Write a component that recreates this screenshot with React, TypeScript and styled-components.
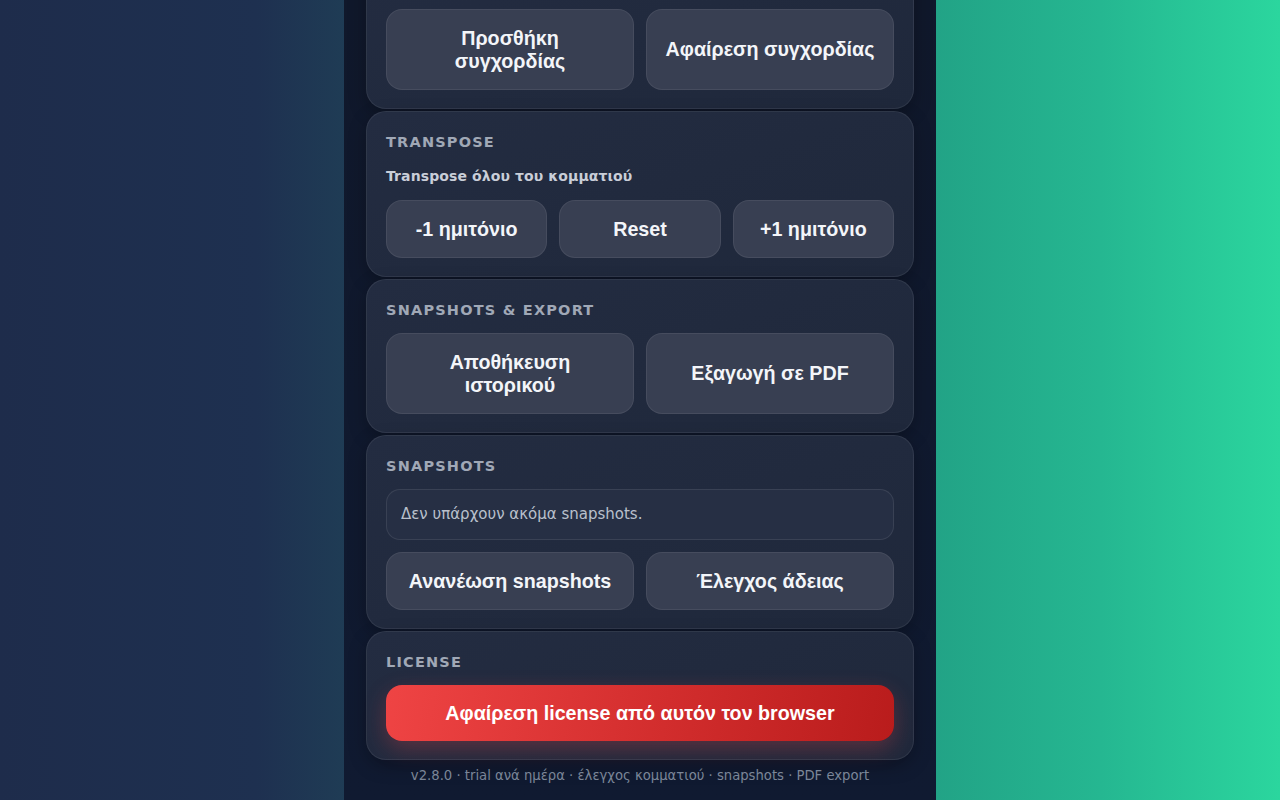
import React from 'react';
import styled, { createGlobalStyle } from 'styled-components';

const GlobalStyle = createGlobalStyle`
  html, body {
    margin: 0;
    padding: 0;
    height: 100%;
  }

  body {
    background: linear-gradient(
      90deg,
      #1e2c4b 0%,
      #1e3050 20%,
      #1f3c55 27%,
      #22a386 73%,
      #25b791 86%,
      #2bd69e 100%
    );
    font-family: 'DejaVu Sans', 'Noto Sans', sans-serif;
    color: #e5e9f0;
  }
`;

const Page = styled.main`
  display: flex;
  justify-content: center;
  height: 100vh;
`;

const Panel = styled.div`
  width: 592px;
  height: 100vh;
  box-sizing: border-box;
  overflow: hidden;
  display: flex;
  flex-direction: column;
  justify-content: flex-end;
  gap: 2px;
  padding: 0 22px 16px;
  background: linear-gradient(180deg, #10182b 0%, #101a31 100%);
`;

const Card = styled.section`
  flex-shrink: 0;
  box-sizing: border-box;
  padding: 19px 19px 18px;
  border-radius: 20px;
  border: 1px solid rgba(255, 255, 255, 0.07);
  background: linear-gradient(160deg, #232c41 0%, #1f283b 100%);
  box-shadow: 0 6px 18px rgba(0, 0, 0, 0.25);
`;

const CardTitle = styled.h3`
  margin: 0 0 12px;
  font-family: 'DejaVu Sans', sans-serif;
  font-size: 14.5px;
  line-height: 22px;
  font-weight: 700;
  letter-spacing: 1.2px;
  text-transform: uppercase;
  color: #a0a8b6;
`;

const CardHint = styled.p`
  margin: 0 0 12px;
  font-family: 'DejaVu Sans', sans-serif;
  font-size: 14px;
  line-height: 23px;
  font-weight: 700;
  letter-spacing: 0.1px;
  color: #c9ced8;
`;

const ButtonRow = styled.div<{ $cols: number }>`
  display: grid;
  grid-template-columns: repeat(${(p) => p.$cols}, 1fr);
  gap: 12px;
`;

const ActionButton = styled.button`
  box-sizing: border-box;
  padding: 16.5px 16px;
  border-radius: 16px;
  border: 1px solid rgba(255, 255, 255, 0.07);
  background: #383f52;
  color: #f3f5f9;
  font-family: 'Liberation Sans', Arial, sans-serif;
  font-size: 19.7px;
  line-height: 23px;
  font-weight: 700;
  text-align: center;
  cursor: pointer;
`;

const DangerButton = styled(ActionButton)`
  width: 100%;
  padding: 16.5px 16px;
  border: none;
  background: linear-gradient(100deg, #ef4444 0%, #d22d2d 55%, #b91c1c 100%);
  color: #ffffff;
  box-shadow: 0 8px 22px rgba(239, 68, 68, 0.28);
`;

const EmptyBox = styled.div`
  margin-bottom: 12px;
  padding: 15px 14px;
  border-radius: 14px;
  border: 1px solid rgba(255, 255, 255, 0.09);
  background: #262f44;
  font-family: 'DejaVu Sans', sans-serif;
  font-size: 15px;
  line-height: 19px;
  color: #b9c0cc;
`;

const Footer = styled.footer`
  flex-shrink: 0;
  margin-top: 6px;
  font-family: 'DejaVu Sans', sans-serif;
  font-size: 13.2px;
  line-height: 16px;
  text-align: center;
  color: #7b8698;
`;

const App: React.FC = () => {
  return (
    <>
      <GlobalStyle />
      <Page>
        <Panel>
          <Card>
            <CardTitle>Συγχορδιες</CardTitle>
            <ButtonRow $cols={2}>
              <ActionButton>
                Προσθήκη
                <br />
                συγχορδίας
              </ActionButton>
              <ActionButton>Αφαίρεση συγχορδίας</ActionButton>
            </ButtonRow>
          </Card>

          <Card>
            <CardTitle>Transpose</CardTitle>
            <CardHint>Transpose όλου του κομματιού</CardHint>
            <ButtonRow $cols={3}>
              <ActionButton>-1 ημιτόνιο</ActionButton>
              <ActionButton>Reset</ActionButton>
              <ActionButton>+1 ημιτόνιο</ActionButton>
            </ButtonRow>
          </Card>

          <Card>
            <CardTitle>Snapshots &amp; Export</CardTitle>
            <ButtonRow $cols={2}>
              <ActionButton>
                Αποθήκευση
                <br />
                ιστορικού
              </ActionButton>
              <ActionButton>Εξαγωγή σε PDF</ActionButton>
            </ButtonRow>
          </Card>

          <Card>
            <CardTitle>Snapshots</CardTitle>
            <EmptyBox>Δεν υπάρχουν ακόμα snapshots.</EmptyBox>
            <ButtonRow $cols={2}>
              <ActionButton>Ανανέωση snapshots</ActionButton>
              <ActionButton>Έλεγχος άδειας</ActionButton>
            </ButtonRow>
          </Card>

          <Card>
            <CardTitle>License</CardTitle>
            <DangerButton>Αφαίρεση license από αυτόν τον browser</DangerButton>
          </Card>

          <Footer>
            v2.8.0 · trial ανά ημέρα · έλεγχος κομματιού · snapshots · PDF export
          </Footer>
        </Panel>
      </Page>
    </>
  );
};

export default App;
